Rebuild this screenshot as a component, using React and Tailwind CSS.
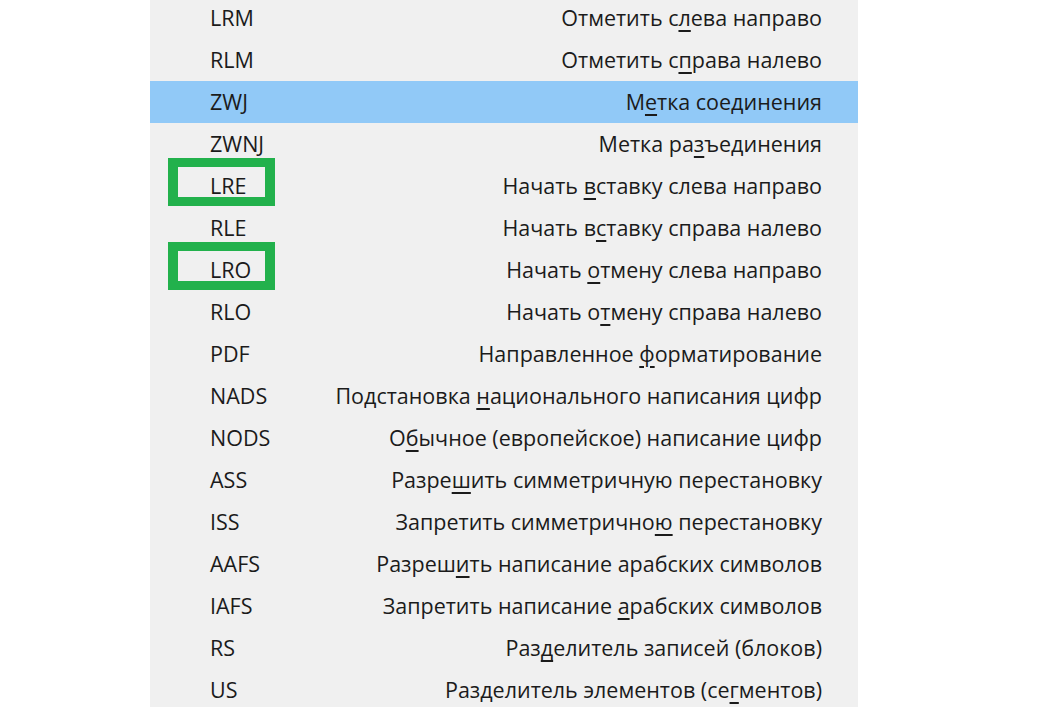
const rows = [
  { code: "LRM", pre: "Отметить с", key: "л", post: "ева направо" },
  { code: "RLM", pre: "Отметить с", key: "п", post: "рава налево" },
  { code: "ZWJ", pre: "М", key: "е", post: "тка соединения", active: true },
  { code: "ZWNJ", pre: "Метка ра", key: "з", post: "ъединения" },
  { code: "LRE", pre: "Начать ", key: "в", post: "ставку слева направо", marked: true },
  { code: "RLE", pre: "Начать в", key: "с", post: "тавку справа налево" },
  { code: "LRO", pre: "Начать ", key: "о", post: "тмену слева направо", marked: true },
  { code: "RLO", pre: "Начать о", key: "т", post: "мену справа налево" },
  { code: "PDF", pre: "Направленное ", key: "ф", post: "орматирование" },
  { code: "NADS", pre: "Подстановка ", key: "н", post: "ационального написания цифр" },
  { code: "NODS", pre: "О", key: "б", post: "ычное (европейское) написание цифр" },
  { code: "ASS", pre: "Разре", key: "ш", post: "ить симметричную перестановку" },
  { code: "ISS", pre: "Запретить симметрично", key: "ю", post: " перестановку" },
  { code: "AAFS", pre: "Разреш", key: "и", post: "ть написание арабских символов" },
  { code: "IAFS", pre: "Запретить написание ", key: "а", post: "рабских символов" },
  { code: "RS", pre: "Раз", key: "д", post: "елитель записей (блоков)" },
  { code: "US", pre: "Разделитель элементов (се", key: "г", post: "ментов)" },
];

function Row({ row }) {
  return (
    <div
      className={
        "flex h-[42px] items-center justify-between pl-[60px] pr-[36px] " +
        (row.active ? "bg-[#91c9f7]" : "")
      }
    >
      <div className="relative">
        {row.marked && (
          <div className="absolute -left-[42px] -top-[12px] h-[48px] w-[107px] border-[9px] border-x-[10px] border-[#22b14c]"></div>
        )}
        <span>{row.code}</span>
      </div>
      <span>
        {row.pre}
        <span className="underline underline-offset-[4px] decoration-[2px]">{row.key}</span>
        {row.post}
      </span>
    </div>
  );
}

export default function App() {
  return (
    <div className="h-[709px] w-[1064px] overflow-hidden bg-white font-['Open_Sans','Noto_Sans',sans-serif] text-[21.5px] text-[#1b1b1b]">
      <div className="ml-[150px] h-[707px] w-[708px] overflow-hidden bg-[#f0f0f0]">
        <div className="-mt-[3px]">
          {rows.map((row) => (
            <Row key={row.code} row={row} />
          ))}
        </div>
      </div>
    </div>
  );
}
